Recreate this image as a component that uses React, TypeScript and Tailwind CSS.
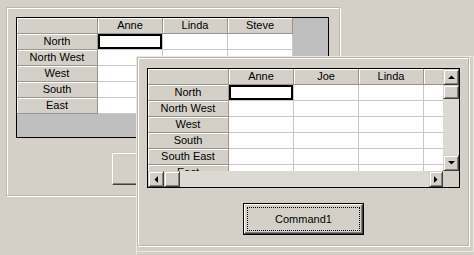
import React from "react";

const FONT = "font-['Liberation_Sans',Arial,sans-serif]";

const ROWS_A = ["North", "North West", "West", "South", "East"];
const ROWS_B = ["North", "North West", "West", "South", "South East", "East"];

function Arrow({ dir }: { dir: "up" | "down" | "left" | "right" }) {
  const pts = {
    up: "0,4 7,4 3.5,0.5",
    down: "0,0 7,0 3.5,3.5",
    left: "4,0 4,7 0.5,3.5",
    right: "0,0 0,7 3.5,3.5",
  }[dir];
  const horiz = dir === "left" || dir === "right";
  return (
    <svg width={horiz ? 4 : 7} height={horiz ? 7 : 4} viewBox={horiz ? "0 0 4 7" : "0 0 7 4"}>
      <polygon points={pts} fill="#000" />
    </svg>
  );
}

const raised =
  "border border-t-[#d4d0c8] border-l-[#d4d0c8] border-r-[#404040] border-b-[#404040] shadow-[inset_1px_1px_0_#fff,inset_-1px_-1px_0_#808080] bg-[#d4d0c8]";

function ScrollBtn({ dir, className = "" }: { dir: "up" | "down" | "left" | "right"; className?: string }) {
  return (
    <div className={`${raised} flex items-center justify-center ${className}`}>
      <Arrow dir={dir} />
    </div>
  );
}

function FixedCell({ w, children }: { w: string; children?: React.ReactNode }) {
  return (
    <div
      className={`${w} h-4 shrink-0 bg-[#d4d0c8] border-r border-b border-[#999690] shadow-[inset_1px_1px_0_#fff] flex items-center justify-center leading-[15px] whitespace-nowrap`}
    >
      {children}
    </div>
  );
}

function DataCell({ focus }: { focus?: boolean }) {
  return (
    <div className="relative w-[65px] h-4 shrink-0 bg-white border-r border-b border-[#c8c8c8]">
      {focus && <div className="absolute inset-0 border-2 border-black" />}
    </div>
  );
}

function FlexGrid({ cols, rows, scroll }: { cols: string[]; rows: string[]; scroll?: boolean }) {
  const table = (
    <div className="flex flex-col">
      <div className="flex">
        <FixedCell w="w-[81px]" />
        {cols.map((c) => (
          <FixedCell key={c} w="w-[65px]">
            {c}
          </FixedCell>
        ))}
      </div>
      {rows.map((r, i) => (
        <div key={r} className="flex">
          <FixedCell w="w-[81px]">{r}</FixedCell>
          {cols.map((c, j) => (
            <DataCell key={c} focus={i === 0 && j === 0} />
          ))}
        </div>
      ))}
    </div>
  );

  if (!scroll) {
    return (
      <div className="w-[313px] h-[121px] border border-black bg-[#bfbfbf] overflow-hidden">{table}</div>
    );
  }

  return (
    <div className="w-[313px] h-[120px] border border-black bg-[#d4d0c8] flex flex-col">
      <div className="flex flex-1 min-h-0">
        <div className="flex-1 overflow-hidden">{table}</div>
        <div className="w-4 flex flex-col bg-[#dcd9d3]">
          <ScrollBtn dir="up" className="h-4" />
          <div className={`${raised} h-[14px]`} />
          <div className="flex-1" />
          <ScrollBtn dir="down" className="h-4" />
        </div>
      </div>
      <div className="h-4 flex">
        <div className="flex-1 flex bg-[#dcd9d3]">
          <ScrollBtn dir="left" className="w-4" />
          <div className={`${raised} w-4`} />
          <div className="flex-1" />
          <ScrollBtn dir="right" className="w-[14px]" />
        </div>
        <div className="w-4 bg-[#d4d0c8]" />
      </div>
    </div>
  );
}

function CmdButton({ label, isDefault }: { label?: string; isDefault?: boolean }) {
  if (isDefault) {
    return (
      <div className="w-[121px] h-[32px] border border-black">
        <div className="h-full border border-t-white border-l-white border-r-[#404040] border-b-[#404040] shadow-[inset_-1px_-1px_0_#808080] p-[2px]">
          <div className="h-full border border-dotted border-black flex items-center justify-center">{label}</div>
        </div>
      </div>
    );
  }
  return (
    <div className="w-[121px] h-[32px] border border-t-white border-l-white border-r-[#404040] border-b-[#404040] shadow-[inset_-1px_-1px_0_#808080] flex items-center justify-center">
      {label}
    </div>
  );
}

function Frame({ children, w, h }: { children: React.ReactNode; w: string; h: string }) {
  return (
    <div className={`${w} ${h} border border-[#bcb8b0] shadow-[1px_1px_0_#fff,inset_1px_1px_0_#fff] pl-[9px] pt-[9px]`}>
      {children}
    </div>
  );
}

export default function App() {
  return (
    <div className={`relative w-[474px] h-[255px] overflow-hidden bg-[#d4d0c8] text-[11px] text-black ${FONT}`}>
      {/* back form */}
      <div className="pl-[6px] pt-[7px]">
        <Frame w="w-[334px]" h="h-[189px]">
          <FlexGrid cols={["Anne", "Linda", "Steve"]} rows={ROWS_A} />
          <div className="ml-[96px] mt-[15px]">
            <CmdButton />
          </div>
        </Frame>
      </div>

      {/* front form */}
      <div className="absolute left-[136px] top-[56px] w-[338px] h-[199px] bg-[#d4d0c8] border-t border-l border-[#ebe9e5]">
        <div className="w-[337px] h-[195px] border-r border-b border-[#ebe9e5]">
          <Frame w="w-[332px]" h="h-[189px]">
            <div className="pt-[1px]">
              <FlexGrid cols={["Anne", "Joe", "Linda", "Steve"]} rows={ROWS_B} scroll />
            </div>
            <div className="ml-[96px] mt-[15px]">
              <CmdButton label="Command1" isDefault />
            </div>
          </Frame>
        </div>
      </div>
    </div>
  );
}
